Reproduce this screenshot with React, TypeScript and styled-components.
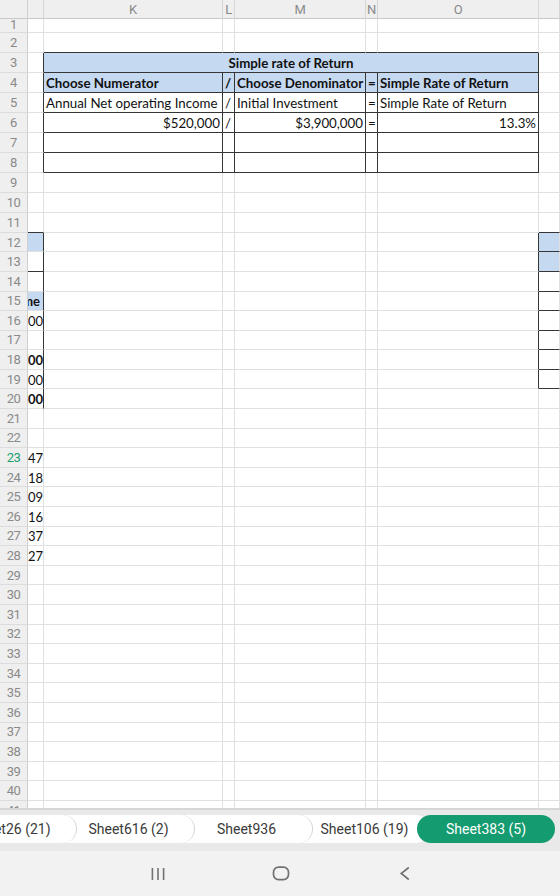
import React from "react"
import styled, { createGlobalStyle } from "styled-components"

const GlobalStyle = createGlobalStyle`
  html, body {
    margin: 0;
    padding: 0;
    background: #fff;
  }
  body {
    font-family: Roboto, "Liberation Sans", sans-serif;
  }
`

// widths: row numbers, then columns J..P
const COLS = [28, 16, 179, 12, 131, 12, 161, 21]
const LETTERS = ["K", "L", "M", "N", "O", ""]
const TEMPLATE = COLS.map((w) => `${w}px`).join(" ")

const BLUE = "#c5d9f1"
const DARK = "#363636"
const GRID = "#e0e0e0"

const Screen = styled.div`
  width: 560px;
  height: 896px;
  display: flex;
  flex-direction: column;
  overflow: hidden;
  background: #fff;
`

const Sheet = styled.div`
  height: 808px;
  display: flex;
  flex-direction: column;
  overflow: hidden;
`

const HeaderRow = styled.div`
  display: grid;
  grid-template-columns: ${TEMPLATE};
  height: 19px;
  flex-shrink: 0;
  position: relative;
  z-index: 1;
`

const Corner = styled.div`
  background: #efefef;
  border-right: 1px solid #cfcfcf;
  border-bottom: 1px solid #c9c9c9;
  box-sizing: border-box;
`

const ColHead = styled.div`
  background: #efefef;
  border-right: 1px solid #d6d6d6;
  border-bottom: 1px solid #c9c9c9;
  box-sizing: border-box;
  color: #8a8a8a;
  font-size: 13px;
  letter-spacing: -0.3px;
  display: flex;
  align-items: center;
  justify-content: center;
`

const Body = styled.div`
  flex: 1;
  overflow: hidden;
`

// scrolled a few pixels down, so row 1 is partly under the header
const Rows = styled.div`
  margin-top: -5.6px;
`

const Row = styled.div<{ $h: number }>`
  display: grid;
  grid-template-columns: ${TEMPLATE};
  height: ${(p) => p.$h}px;
`

const RowHead = styled.div<{ $active?: boolean; $under?: boolean }>`
  background: #efefef;
  border-right: 1px solid #cfcfcf;
  border-bottom: 1px solid #dcdcdc;
  box-sizing: border-box;
  color: ${(p) => (p.$active ? "#1f9d6f" : "#8a8a8a")};
  font-size: 13px;
  letter-spacing: -0.5px;
  display: flex;
  align-items: ${(p) => (p.$under ? "flex-end" : "center")};
  justify-content: center;
`

interface CellProps {
  $fill?: boolean
  $bold?: boolean
  $align?: "left" | "right" | "center"
  $r?: boolean
  $b?: boolean
  $span?: number
}

const Cell = styled.div<CellProps>`
  grid-column: span ${(p) => p.$span || 1};
  box-sizing: border-box;
  border-right: 1px solid ${(p) => (p.$r ? DARK : GRID)};
  border-bottom: 1px solid ${(p) => (p.$b ? DARK : GRID)};
  background: ${(p) => (p.$fill ? BLUE : "#fff")};
  font-family: Lato, "Open Sans", sans-serif;
  font-size: 13.3px;
  font-weight: ${(p) => (p.$bold ? 700 : 400)};
  color: #111;
  padding: 1px 2px 0;
  display: flex;
  align-items: center;
  justify-content: ${(p) =>
    p.$align === "right" ? "flex-end" : p.$align === "center" ? "center" : "flex-start"};
  white-space: nowrap;
  overflow: hidden;
`

// the narrow column at the pane edge, text mostly clipped
const EdgeCell = styled(Cell)<{ $inset?: number }>`
  padding: 1px ${(p) => p.$inset || 0}px 0 0;
  font-size: 13px;
`

const TabBar = styled.div`
  height: 43px;
  box-sizing: border-box;
  background: #e9e9e9;
  border-top: 2px solid #d6d6d6;
  padding-top: 5px;
  overflow: hidden;
`

// strip is scrolled left, the first tab is cut off
const TabStrip = styled.div`
  display: flex;
  margin-left: -55px;
`

const Tab = styled.div<{ $z: number; $active?: boolean }>`
  position: relative;
  z-index: ${(p) => p.$z};
  flex-shrink: 0;
  height: 28px;
  box-sizing: border-box;
  min-width: ${(p) => (p.$active ? 138 : 132)}px;
  padding: 0 16px;
  margin-left: -14px;
  border-radius: ${(p) => (p.$active ? "14px" : "0 14px 14px 0")};
  border-right: ${(p) => (p.$active ? "none" : "1.5px solid #d4d4d4")};
  background: ${(p) => (p.$active ? "#149b6f" : "#fff")};
  color: ${(p) => (p.$active ? "#fff" : "#3a3a3a")};
  font-size: 14px;
  display: flex;
  align-items: center;
  justify-content: center;
  white-space: nowrap;

  &:first-child {
    margin-left: 0;
  }
`

const NavBar = styled.div`
  flex: 1;
  background: #f2f2f2;
  display: flex;
  align-items: center;
  justify-content: center;
  padding-left: 3px;
`

const NavButton = styled.div`
  width: 123.4px;
  height: 100%;
  display: flex;
  align-items: center;
  justify-content: center;
  color: #717171;
`

type Spec = {
  text?: string
  bold?: boolean
  align?: "left" | "right" | "center"
  fill?: boolean
  span?: number
  inset?: number
}

// K..O of the rate of return box, rows 3 to 8
const summary: Record<number, Spec[]> = {
  3: [{ text: "Simple rate of Return", bold: true, align: "center", fill: true, span: 5 }],
  4: [
    { text: "Choose Numerator", bold: true, fill: true },
    { text: "/", bold: true, fill: true },
    { text: "Choose Denominator", bold: true, fill: true },
    { text: "=", bold: true, fill: true },
    { text: "Simple Rate of Return", bold: true, fill: true },
  ],
  5: [
    { text: "Annual Net operating Income" },
    { text: "/" },
    { text: "Initial Investment" },
    { text: "=" },
    { text: "Simple Rate of Return" },
  ],
  6: [
    { text: "$520,000", align: "right" },
    { text: "/" },
    { text: "$3,900,000", align: "right" },
    { text: "=" },
    { text: "13.3%", align: "right" },
  ],
  7: [{}, {}, {}, {}, {}],
  8: [{}, {}, {}, {}, {}],
}

// column J, mostly scrolled out of view
const columnJ: Record<number, Spec> = {
  12: { fill: true },
  15: { text: "me", bold: true, fill: true, align: "right", inset: 3 },
  16: { text: "00", align: "right" },
  18: { text: "00", bold: true, align: "right" },
  19: { text: "00", align: "right" },
  20: { text: "00", bold: true, align: "right" },
  23: { text: "47", align: "right" },
  24: { text: "18", align: "right" },
  25: { text: "09", align: "right" },
  26: { text: "16", align: "right" },
  27: { text: "37", align: "right" },
  28: { text: "27", align: "right" },
}

const tabs = ["Sheet26 (21)", "Sheet616 (2)", "Sheet936", "Sheet106 (19)"]

const rowHeight = (n: number) => (n <= 11 ? 19.94 : 19.6)

function SheetRow({ n }: { n: number }) {
  const j = columnJ[n] || {}
  const jRight = (n >= 3 && n <= 8) || (n >= 12 && n <= 20)
  const jBottom = n === 11 || n === 13
  const rightBox = n >= 11 && n <= 19

  const box = summary[n]
  const cells = box
    ? box.map((c, i) => (
        <Cell key={i} $span={c.span} $fill={c.fill} $bold={c.bold} $align={c.align} $r $b>
          {c.text}
        </Cell>
      ))
    : [0, 1, 2, 3, 4].map((i) => (
        <Cell key={i} $b={n === 2} $r={i === 4 && n >= 12 && n <= 19} />
      ))

  return (
    <Row $h={rowHeight(n)}>
      <RowHead $active={n === 23} $under={n === 1}>
        {n}
      </RowHead>
      <EdgeCell
        $fill={j.fill}
        $bold={j.bold}
        $align={j.align}
        $inset={j.inset}
        $r={jRight}
        $b={jBottom}
      >
        {j.text}
      </EdgeCell>
      {cells}
      <Cell $fill={n === 12 || n === 13} $b={rightBox} />
    </Row>
  )
}

function RecentsIcon() {
  return (
    <svg width="16" height="14" viewBox="0 0 16 14" fill="none" stroke="currentColor" strokeWidth="1.6">
      <line x1="2.4" y1="1" x2="2.4" y2="13" />
      <line x1="8" y1="1" x2="8" y2="13" />
      <line x1="13.6" y1="1" x2="13.6" y2="13" />
    </svg>
  )
}

function HomeIcon() {
  return (
    <svg width="18" height="15" viewBox="0 0 18 15" fill="none" stroke="currentColor" strokeWidth="1.7">
      <rect x="1.5" y="1.2" width="15" height="12.4" rx="5" />
    </svg>
  )
}

function BackIcon() {
  return (
    <svg width="12" height="15" viewBox="0 0 12 15" fill="none" stroke="currentColor" strokeWidth="1.6">
      <polyline points="9.8,1.5 2.2,7.5 9.8,13.5" />
    </svg>
  )
}

export default function App() {
  const rows = Array.from({ length: 41 }, (_, i) => i + 1)
  return (
    <Screen>
      <GlobalStyle />
      <Sheet>
        <HeaderRow>
          <Corner />
          <ColHead />
          {LETTERS.map((l, i) => (
            <ColHead key={i}>{l}</ColHead>
          ))}
        </HeaderRow>
        <Body>
          <Rows>
            {rows.map((n) => (
              <SheetRow key={n} n={n} />
            ))}
          </Rows>
        </Body>
      </Sheet>
      <TabBar>
        <TabStrip>
          {tabs.map((t, i) => (
            <Tab key={t} $z={10 - i}>
              {t}
            </Tab>
          ))}
          <Tab $z={20} $active>
            Sheet383 (5)
          </Tab>
        </TabStrip>
      </TabBar>
      <NavBar>
        <NavButton>
          <RecentsIcon />
        </NavButton>
        <NavButton>
          <HomeIcon />
        </NavButton>
        <NavButton>
          <BackIcon />
        </NavButton>
      </NavBar>
    </Screen>
  )
}
